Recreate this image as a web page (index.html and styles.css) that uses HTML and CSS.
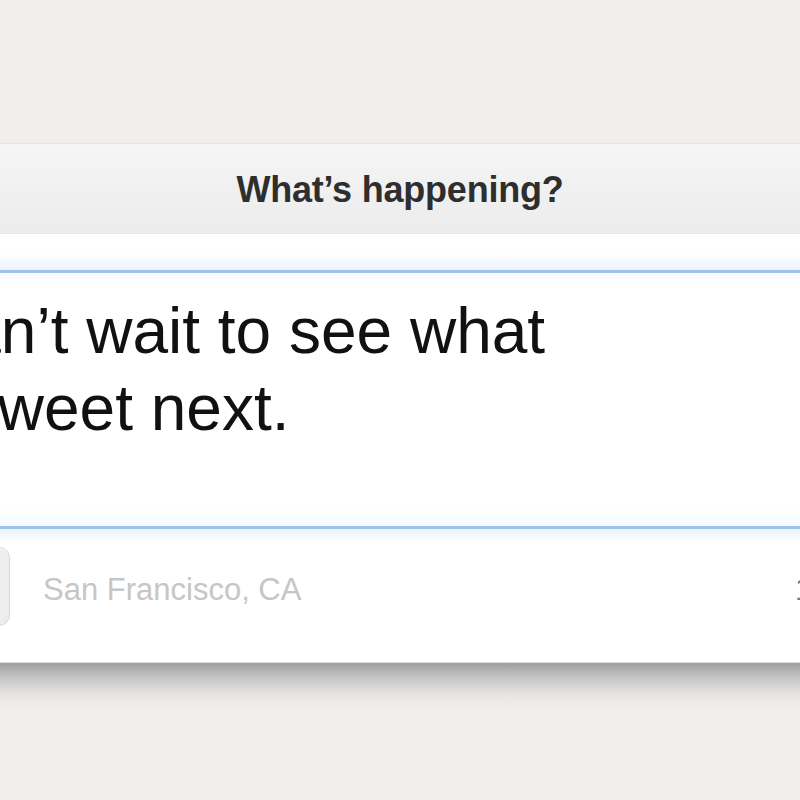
FILE: index.html
```html
<!DOCTYPE html>
<html>
  <head>
    <meta charset="UTF-8" />
    <title>What's happening?</title>
    <link rel="stylesheet" href="styles.css">
  </head>
  <body>
    <div class="sheet">
      <div class="titlebar">
        <h2>What’s happening?</h2>
      </div>
      <div class="spacer"></div>
      <div class="compose">
        <p class="tweet">Can’t wait to see what<br />tweet next.</p>
      </div>
      <div class="footer">
        <button class="photo" type="button"></button>
        <span class="location">San Francisco, CA</span>
        <span class="count">140</span>
      </div>
    </div>
    <div class="shadow"></div>
  </body>
</html>
```

FILE: styles.css
```css
* {
  box-sizing: border-box;
}
html,
body {
  overflow: hidden;
}
body {
  margin: 0;
  height: 800px;
  font-family: "Liberation Sans", Arial, sans-serif;
  background-color: #f1efee;
}
.sheet {
  margin-top: 143px;
  background: #fff;
  border-top: 1px solid #e4e4e4;
}
.titlebar {
  height: 90px;
  background: linear-gradient(#f5f5f6, #ececed);
  border-bottom: 1px solid #e6e6e6;
  display: flex;
  justify-content: center;
  align-items: center;
}
h2 {
  margin: 0;
  padding-top: 2px;
  font-size: 36px;
  font-weight: bold;
  color: #2e2e2e;
  letter-spacing: -0.2px;
}
.spacer {
  height: 36px;
  background: linear-gradient(#fff 55%, #eaf3fc);
}
.compose {
  height: 259px;
  border-top: 3px solid #9dc3e6;
  border-bottom: 3px solid #9dc3e6;
  background: linear-gradient(#f7fbff, #fff 12px, #fff 236px, #f4f9fe);
  padding-top: 20px;
  overflow: hidden;
}
.tweet {
  margin: 0 0 0 -20px;
  font-size: 64px;
  line-height: 77px;
  color: #111;
  text-indent: -61px;
  white-space: nowrap;
}
.footer {
  height: 134px;
  display: flex;
  align-items: flex-start;
  background: linear-gradient(#eaf3fc, #fff 14px);
  border-bottom: 1px solid #dcdcdc;
}
.photo {
  width: 60px;
  height: 79px;
  margin: 18px 0 0 -50px;
  border: 1px solid #d6d6d6;
  border-radius: 11px;
  background: linear-gradient(90deg, #fafafa, #ececec);
  box-shadow: inset 0 1px 0 #fff;
}
.location {
  margin: 43px 0 0 33px;
  font-size: 31px;
  color: #c6c6c6;
}
.count {
  margin: 43px -60px 0 auto;
  width: 65px;
  font-size: 31px;
  color: #777;
}
.shadow {
  height: 45px;
  background: linear-gradient(#9d9c9e, #c4c3c4 30%, #e7e5e4 70%, #f1efee);
}
```
